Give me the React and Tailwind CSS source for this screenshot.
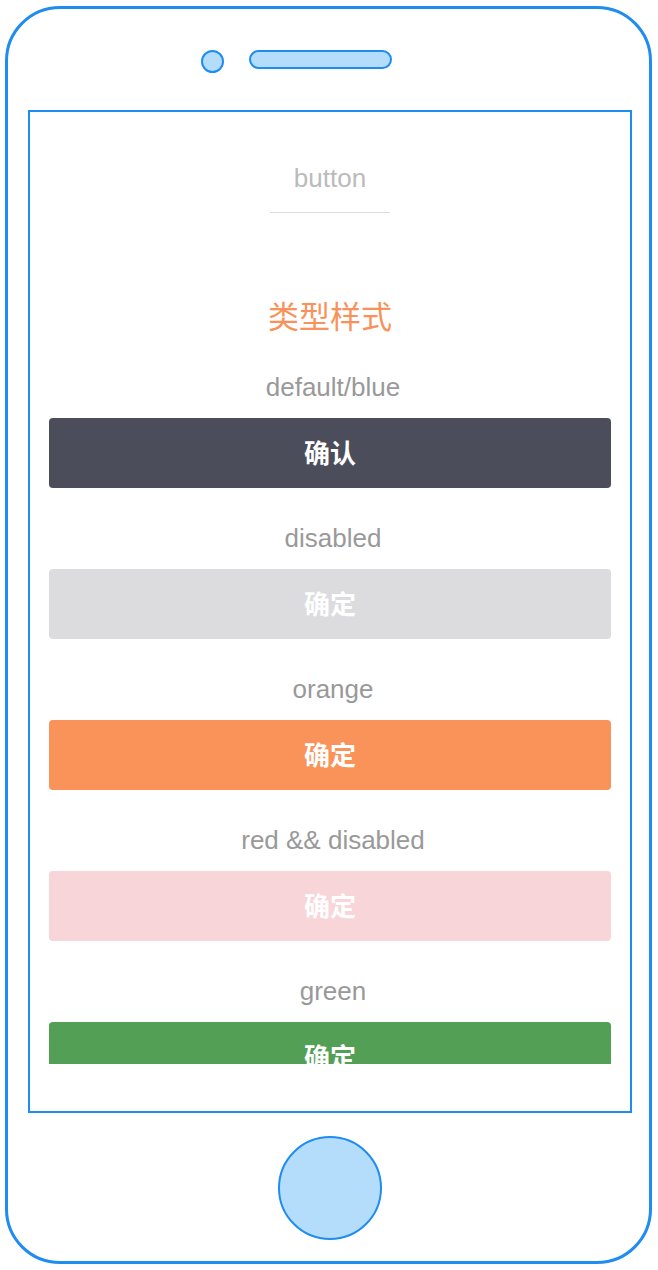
import React from "react";

const font = { fontFamily: '"Liberation Sans", "Noto Sans CJK SC", sans-serif' };

function Section({ label, text, cls }) {
  return (
    <div className="flex flex-col items-center mb-[32px]">
      <div className="h-[36px] leading-[36px] pl-[6px] text-[26px] text-[#999999]">{label}</div>
      <div
        className={`mt-[13px] w-[562px] h-[70px] rounded-[4px] flex items-center justify-center pt-[3px] text-[26px] font-bold ${cls}`}
      >
        {text}
      </div>
    </div>
  );
}

export default function App() {
  return (
    <div className="w-[658px] h-[1270px] bg-white pt-[6px] pl-[5px]" style={font}>
      <div className="relative w-[647px] h-[1258px] border-[3px] border-[#1e8cf0] rounded-[55px] bg-white">
        {/* top: camera + speaker */}
        <div className="flex items-start pt-[41px] pl-[193px] gap-[25px] h-[101px]">
          <div className="w-[23px] h-[23px] rounded-full border-2 border-[#1e8cf0] bg-[#b3ddfb]" />
          <div className="w-[143px] h-[19px] rounded-full border-2 border-[#1e8cf0] bg-[#b3ddfb]" />
        </div>
        {/* screen */}
        <div className="ml-[20px] w-[604px] h-[1003px] border-2 border-[#1e8cf0] bg-white">
          <div className="h-[952px] overflow-hidden flex flex-col items-center">
            <div className="pt-[48px] h-[84px] leading-[36px] text-[26px] text-[#bbbbbb]">
              button
            </div>
            <div className="mt-[16px] w-[120px] border-t border-[#dcdcdc]" />
            <div className="mt-[85px] h-[40px] leading-[40px] text-[31px] text-[#f9925a]">
              类型样式
            </div>
            <div className="mt-[31px] flex flex-col items-center">
              <Section label="default/blue" text="确认" cls="bg-[#4b4d5a] text-white" />
              <Section label="disabled" text="确定" cls="bg-[#dcdcde] text-white" />
              <Section label="orange" text="确定" cls="bg-[#f9935a] text-white" />
              <Section label="red && disabled" text="确定" cls="bg-[#f7d5d9] text-white" />
              <Section label="green" text="确定" cls="bg-[#539f55] text-white" />
            </div>
          </div>
        </div>
        {/* home button */}
        <div className="flex justify-center pt-[23px] pl-[2px]">
          <div className="w-[104px] h-[104px] rounded-full border-2 border-[#1e8cf0] bg-[#b3ddfb]" />
        </div>
      </div>
    </div>
  );
}
